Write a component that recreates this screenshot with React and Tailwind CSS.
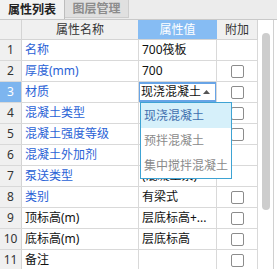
import React from 'react';

const rows = [
  { n: 1, name: '名称', value: '700筏板', blue: true, check: false },
  { n: 2, name: '厚度(mm)', value: '700', blue: true, check: true },
  { n: 3, name: '材质', value: '现浇混凝土', blue: true, check: true, editing: true },
  { n: 4, name: '混凝土类型', value: '', blue: true, check: true },
  { n: 5, name: '混凝土强度等级', value: '', blue: true, check: true },
  { n: 6, name: '混凝土外加剂', value: '', blue: true, check: false },
  { n: 7, name: '泵送类型', value: '(混凝土泵)', blue: true, check: false },
  { n: 8, name: '类别', value: '有梁式', blue: true, check: true },
  { n: 9, name: '顶标高(m)', value: '层底标高+...', blue: false, check: true },
  { n: 10, name: '底标高(m)', value: '层底标高', blue: false, check: true },
  { n: 11, name: '备注', value: '', blue: false, check: true },
];

const options = ['现浇混凝土', '预拌混凝土', '集中搅拌混凝土'];

const Row = ({ row }) => (
  <div className="flex h-[21px] shrink-0 border-b border-[#d9d9d9]">
    <div
      className={`w-[22px] shrink-0 border-r border-[#d4d4d4] flex items-center justify-center ${
        row.editing ? 'bg-[#7db5ef] text-white' : 'bg-[#f0f0f0] text-[#333]'
      }`}
    >
      {row.n}
    </div>
    <div
      className={`w-[116px] shrink-0 pl-[3px] flex items-center whitespace-nowrap overflow-hidden ${
        row.blue ? 'text-[#2a62d6]' : 'text-[#111]'
      }`}
    >
      {row.name}
    </div>
    <div className="w-[79px] shrink-0 border-l border-r border-[#d9d9d9] flex items-center whitespace-nowrap overflow-hidden text-[#111]">
      {row.editing ? (
        <div className="h-[20px] w-[79px] shrink-0 -ml-[1px] border-2 border-[#68a4e6] flex items-center pl-[1px] pr-[5px] justify-between bg-white">
          <span>{row.value}</span>
          <svg width="7" height="4" viewBox="0 0 7 4">
            <path d="M0 4 L3.5 0 L7 4 Z" fill="#555" />
          </svg>
        </div>
      ) : (
        <span className="pl-[3px]">{row.value}</span>
      )}
    </div>
    <div className="w-[41px] shrink-0 border-r border-[#d9d9d9] flex items-center justify-center">
      {row.check && (
        <span className="w-[13px] h-[13px] rounded-[2px] border border-[#8c8c8c] bg-white" />
      )}
    </div>
  </div>
);

export default function App() {
  return (
    <div
      className="relative w-[277px] h-[269px] overflow-hidden bg-white text-[12px] leading-[20px]"
      style={{ fontFamily: '"Noto Sans", "Noto Sans CJK SC", sans-serif' }}
    >
      {/* Tabs */}
      <div className="flex h-[20px] bg-[#ececec] border-b border-[#c9c9c9]">
        <div className="w-[65px] h-full bg-[#f2f2f2] border-r border-[#bdbdbd] flex items-center justify-center font-bold text-[#222]">
          属性列表
        </div>
        <div className="w-[64px] h-[18px] bg-[#e0e0e0] border-r border-b border-[#cdcdcd] flex items-center justify-center font-bold text-[#8c8c8c]">
          图层管理
        </div>
      </div>

      <div className="flex">
        {/* Table */}
        <div className="flex flex-col w-[258px] shrink-0">
          <div className="flex h-[20px] shrink-0 border-b border-[#d4d4d4] bg-[#f0f0f0] text-[#333]">
            <div className="w-[22px] shrink-0 border-r border-[#d4d4d4]" />
            <div className="w-[116px] shrink-0 flex items-center justify-center">属性名称</div>
            <div className="w-[79px] shrink-0 bg-[#86bcf3] text-white flex items-center justify-center">属性值</div>
            <div className="w-[41px] shrink-0 border-r border-[#d4d4d4] flex items-center justify-center">附加</div>
          </div>
          {rows.map((row) => (
            <Row key={row.n} row={row} />
          ))}
        </div>

        {/* Scrollbar */}
        <div className="w-[15px] shrink-0 bg-white">
          <div className="mt-[13px] ml-[4px] w-[8px] h-[177px] rounded-full bg-[#cdcdcd]" />
        </div>
        <div className="w-[1px] shrink-0 h-[249px] bg-[#d0d0d0]" />
        <div className="w-[3px] shrink-0 bg-white" />
      </div>

      {/* Dropdown list */}
      <div className="absolute left-[140px] top-[102px] w-[92px] h-[77px] border border-[#3ea3d3] bg-white">
        {options.map((o, i) => (
          <div
            key={o}
            className={`h-[25px] pl-[3px] flex items-center whitespace-nowrap ${
              i === 0 ? 'bg-[#d6f0fa] text-[#3f6fae]' : 'text-[#8a8a8a]'
            }`}
          >
            {o}
          </div>
        ))}
      </div>
    </div>
  );
}
